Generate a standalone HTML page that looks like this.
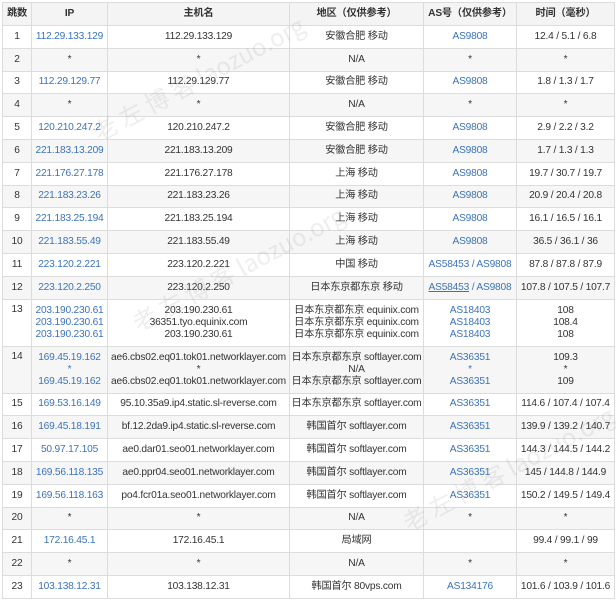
<!DOCTYPE html>
<html><head><meta charset="utf-8"><style>
body{margin:0;background:#fff;width:616px;height:601px;overflow:hidden;position:relative}
table{position:absolute;left:2px;top:2px;width:612px;border-collapse:collapse;font-family:"Liberation Sans","Noto Sans CJK SC",sans-serif;font-size:10.2px;letter-spacing:-0.2px;color:#333;table-layout:fixed}
td,th{border:1px solid #dcdcdc;text-align:center;padding:0;line-height:12px;white-space:nowrap;overflow:hidden}
th{height:22px;background:#f4f4f4;font-weight:bold}
td{height:21.8px}
tr:nth-child(odd) td{background:#f6f6f6}
tr.m td{height:46px}
.b{color:#3b73b9}
td.l{vertical-align:top;padding-top:4px;height:42px !important}
.wm{position:absolute;font-family:"Noto Sans CJK SC",sans-serif;color:rgba(150,150,150,0.16);font-size:24px;transform:rotate(-28deg);white-space:nowrap}
</style></head><body>
<table>
<colgroup><col style="width:29px"><col style="width:76px"><col style="width:182px"><col style="width:134px"><col style="width:93px"><col style="width:98px"></colgroup>
<tr><th>跳数</th><th>IP</th><th>主机名</th><th>地区（仅供参考）</th><th>AS号（仅供参考）</th><th>时间（毫秒）</th></tr>
<tr><td>1</td><td class="b">112.29.133.129</td><td>112.29.133.129</td><td>安徽合肥 移动</td><td class="b">AS9808</td><td>12.4 / 5.1 / 6.8</td></tr>
<tr><td>2</td><td>*</td><td>*</td><td>N/A</td><td>*</td><td>*</td></tr>
<tr><td>3</td><td class="b">112.29.129.77</td><td>112.29.129.77</td><td>安徽合肥 移动</td><td class="b">AS9808</td><td>1.8 / 1.3 / 1.7</td></tr>
<tr><td>4</td><td>*</td><td>*</td><td>N/A</td><td>*</td><td>*</td></tr>
<tr><td>5</td><td class="b">120.210.247.2</td><td>120.210.247.2</td><td>安徽合肥 移动</td><td class="b">AS9808</td><td>2.9 / 2.2 / 3.2</td></tr>
<tr><td>6</td><td class="b">221.183.13.209</td><td>221.183.13.209</td><td>安徽合肥 移动</td><td class="b">AS9808</td><td>1.7 / 1.3 / 1.3</td></tr>
<tr><td>7</td><td class="b">221.176.27.178</td><td>221.176.27.178</td><td>上海 移动</td><td class="b">AS9808</td><td>19.7 / 30.7 / 19.7</td></tr>
<tr><td>8</td><td class="b">221.183.23.26</td><td>221.183.23.26</td><td>上海 移动</td><td class="b">AS9808</td><td>20.9 / 20.4 / 20.8</td></tr>
<tr><td>9</td><td class="b">221.183.25.194</td><td>221.183.25.194</td><td>上海 移动</td><td class="b">AS9808</td><td>16.1 / 16.5 / 16.1</td></tr>
<tr><td>10</td><td class="b">221.183.55.49</td><td>221.183.55.49</td><td>上海 移动</td><td class="b">AS9808</td><td>36.5 / 36.1 / 36</td></tr>
<tr><td>11</td><td class="b">223.120.2.221</td><td>223.120.2.221</td><td>中国 移动</td><td class="b">AS58453 / AS9808</td><td>87.8 / 87.8 / 87.9</td></tr>
<tr><td>12</td><td class="b">223.120.2.250</td><td>223.120.2.250</td><td>日本东京都东京 移动</td><td class="b"><u>AS58453</u> / AS9808</td><td>107.8 / 107.5 / 107.7</td></tr>
<tr class="m"><td class="l">13</td><td class="b">203.190.230.61<br>203.190.230.61<br>203.190.230.61</td><td>203.190.230.61<br>36351.tyo.equinix.com<br>203.190.230.61</td><td>日本东京都东京 equinix.com<br>日本东京都东京 equinix.com<br>日本东京都东京 equinix.com</td><td class="b">AS18403<br>AS18403<br>AS18403</td><td>108<br>108.4<br>108</td></tr>
<tr class="m"><td class="l">14</td><td class="b">169.45.19.162<br>*<br>169.45.19.162</td><td>ae6.cbs02.eq01.tok01.networklayer.com<br>*<br>ae6.cbs02.eq01.tok01.networklayer.com</td><td>日本东京都东京 softlayer.com<br>N/A<br>日本东京都东京 softlayer.com</td><td class="b">AS36351<br>*<br>AS36351</td><td>109.3<br>*<br>109</td></tr>
<tr><td>15</td><td class="b">169.53.16.149</td><td>95.10.35a9.ip4.static.sl-reverse.com</td><td>日本东京都东京 softlayer.com</td><td class="b">AS36351</td><td>114.6 / 107.4 / 107.4</td></tr>
<tr><td>16</td><td class="b">169.45.18.191</td><td>bf.12.2da9.ip4.static.sl-reverse.com</td><td>韩国首尔 softlayer.com</td><td class="b">AS36351</td><td>139.9 / 139.2 / 140.7</td></tr>
<tr><td>17</td><td class="b">50.97.17.105</td><td>ae0.dar01.seo01.networklayer.com</td><td>韩国首尔 softlayer.com</td><td class="b">AS36351</td><td>144.3 / 144.5 / 144.2</td></tr>
<tr><td>18</td><td class="b">169.56.118.135</td><td>ae0.ppr04.seo01.networklayer.com</td><td>韩国首尔 softlayer.com</td><td class="b">AS36351</td><td>145 / 144.8 / 144.9</td></tr>
<tr><td>19</td><td class="b">169.56.118.163</td><td>po4.fcr01a.seo01.networklayer.com</td><td>韩国首尔 softlayer.com</td><td class="b">AS36351</td><td>150.2 / 149.5 / 149.4</td></tr>
<tr><td>20</td><td>*</td><td>*</td><td>N/A</td><td>*</td><td>*</td></tr>
<tr><td>21</td><td class="b">172.16.45.1</td><td>172.16.45.1</td><td>局域网</td><td></td><td>99.4 / 99.1 / 99</td></tr>
<tr><td>22</td><td>*</td><td>*</td><td>N/A</td><td>*</td><td>*</td></tr>
<tr><td>23</td><td class="b">103.138.12.31</td><td>103.138.12.31</td><td>韩国首尔 80vps.com</td><td class="b">AS134176</td><td>101.6 / 103.9 / 101.6</td></tr>
</table>
<div class="wm" style="left:80px;top:60px">老 左 博 客 laozuo.org</div>
<div class="wm" style="left:120px;top:250px">老 左 博 客 laozuo.org</div>
<div class="wm" style="left:390px;top:450px">老 左 博 客 laozuo.org</div>
</body></html>
